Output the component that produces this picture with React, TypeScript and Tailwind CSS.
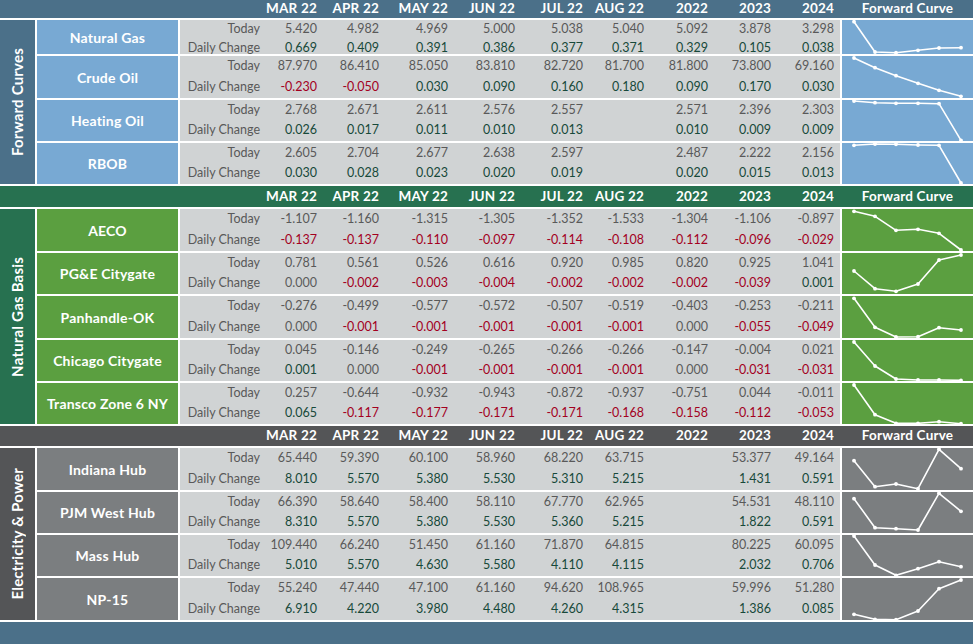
import React from 'react';

type Row = {
  name: string;
  h: string;
  today: string[];
  change: string[];
  curve: number[];
};

type Section = {
  label: string;
  headerBg: string;
  headerH: string;
  labelBg: string;
  cellBg: string;
  chartBg: string;
  rows: Row[];
};

const COLS = ['MAR 22', 'APR 22', 'MAY 22', 'JUN 22', 'JUL 22', 'AUG 22', '2022', '2023', '2024'];
const XS = [12, 33, 54, 76, 97, 119];

const sections: Section[] = [
  {
    label: 'Forward Curves',
    headerBg: 'bg-[#4b7089]',
    headerH: 'h-[18px]',
    labelBg: 'bg-[#4b7089]',
    cellBg: 'bg-[#78a9d3]',
    chartBg: 'bg-[#78a9d3]',
    rows: [
      {
        name: 'Natural Gas',
        h: 'h-[34px]',
        today: ['5.420', '4.982', '4.969', '5.000', '5.038', '5.040', '5.092', '3.878', '3.298'],
        change: ['0.669', '0.409', '0.391', '0.386', '0.377', '0.371', '0.329', '0.105', '0.038'],
        curve: [1.7, 32, 32.7, 30.3, 28, 27.7],
      },
      {
        name: 'Crude Oil',
        h: 'h-[42px]',
        today: ['87.970', '86.410', '85.050', '83.810', '82.720', '81.700', '81.800', '73.800', '69.160'],
        change: ['-0.230', '-0.050', '0.030', '0.090', '0.160', '0.180', '0.090', '0.170', '0.030'],
        curve: [2, 11.7, 19.7, 27.3, 34.3, 40.3],
      },
      {
        name: 'Heating Oil',
        h: 'h-[41px]',
        today: ['2.768', '2.671', '2.611', '2.576', '2.557', '', '2.571', '2.396', '2.303'],
        change: ['0.026', '0.017', '0.011', '0.010', '0.013', '', '0.010', '0.009', '0.009'],
        curve: [1, 2.7, 3.3, 3.3, 3.7, 40.3],
      },
      {
        name: 'RBOB',
        h: 'h-[41px]',
        today: ['2.605', '2.704', '2.677', '2.638', '2.597', '', '2.487', '2.222', '2.156'],
        change: ['0.030', '0.028', '0.023', '0.020', '0.019', '', '0.020', '0.015', '0.013'],
        curve: [2.3, 1, 1.3, 2, 2.3, 40],
      },
    ],
  },
  {
    label: 'Natural Gas Basis',
    headerBg: 'bg-[#277150]',
    headerH: 'h-[21px]',
    labelBg: 'bg-[#277150]',
    cellBg: 'bg-[#5b9f40]',
    chartBg: 'bg-[#5b9f40]',
    rows: [
      {
        name: 'AECO',
        h: 'h-[42px]',
        today: ['-1.107', '-1.160', '-1.315', '-1.305', '-1.352', '-1.533', '-1.304', '-1.106', '-0.897'],
        change: ['-0.137', '-0.137', '-0.110', '-0.097', '-0.114', '-0.108', '-0.112', '-0.096', '-0.029'],
        curve: [2.3, 7.3, 21.3, 20.3, 24.3, 41],
      },
      {
        name: 'PG&E Citygate',
        h: 'h-[41px]',
        today: ['0.781', '0.561', '0.526', '0.616', '0.920', '0.985', '0.820', '0.925', '1.041'],
        change: ['0.000', '-0.002', '-0.003', '-0.004', '-0.002', '-0.002', '-0.002', '-0.039', '0.001'],
        curve: [18, 35.7, 38.3, 31, 7, 2],
      },
      {
        name: 'Panhandle-OK',
        h: 'h-[42px]',
        today: ['-0.276', '-0.499', '-0.577', '-0.572', '-0.507', '-0.519', '-0.403', '-0.253', '-0.211'],
        change: ['0.000', '-0.001', '-0.001', '-0.001', '-0.001', '-0.001', '0.000', '-0.055', '-0.049'],
        curve: [2.3, 31.3, 41, 40.7, 31.7, 34],
      },
      {
        name: 'Chicago Citygate',
        h: 'h-[41px]',
        today: ['0.045', '-0.146', '-0.249', '-0.265', '-0.266', '-0.266', '-0.147', '-0.004', '0.021'],
        change: ['0.001', '0.000', '-0.001', '-0.001', '-0.001', '-0.001', '0.000', '-0.031', '-0.031'],
        curve: [2, 26, 39, 40, 40, 40.3],
      },
      {
        name: 'Transco Zone 6 NY',
        h: 'h-[41px]',
        today: ['0.257', '-0.644', '-0.932', '-0.943', '-0.872', '-0.937', '-0.751', '0.044', '-0.011'],
        change: ['0.065', '-0.117', '-0.177', '-0.171', '-0.171', '-0.168', '-0.158', '-0.112', '-0.053'],
        curve: [2, 31.7, 40.3, 40.3, 38.7, 40.7],
      },
    ],
  },
  {
    label: 'Electricity & Power',
    headerBg: 'bg-[#545557]',
    headerH: 'h-[20px]',
    labelBg: 'bg-[#545557]',
    cellBg: 'bg-[#7b7e80]',
    chartBg: 'bg-[#7b7e80]',
    rows: [
      {
        name: 'Indiana Hub',
        h: 'h-[42px]',
        today: ['65.440', '59.390', '60.100', '58.960', '68.220', '63.715', '', '53.377', '49.164'],
        change: ['8.010', '5.570', '5.380', '5.530', '5.310', '5.215', '', '1.431', '0.591'],
        curve: [12.7, 38.7, 36, 40.7, 1.3, 20.7],
      },
      {
        name: 'PJM West Hub',
        h: 'h-[41px]',
        today: ['66.390', '58.640', '58.400', '58.110', '67.770', '62.965', '', '54.531', '48.110'],
        change: ['8.310', '5.570', '5.380', '5.530', '5.360', '5.215', '', '1.822', '0.591'],
        curve: [6.7, 35.7, 36.7, 38, 1.3, 19.3],
      },
      {
        name: 'Mass Hub',
        h: 'h-[41px]',
        today: ['109.440', '66.240', '51.450', '61.160', '71.870', '64.815', '', '80.225', '60.095'],
        change: ['5.010', '5.570', '4.630', '5.580', '4.110', '4.115', '', '2.032', '0.706'],
        curve: [1, 30, 40.3, 33.7, 26.7, 31.7],
      },
      {
        name: 'NP-15',
        h: 'h-[42px]',
        today: ['55.240', '47.440', '47.100', '61.160', '94.620', '108.965', '', '59.996', '51.280'],
        change: ['6.910', '4.220', '3.980', '4.480', '4.260', '4.315', '', '1.386', '0.085'],
        curve: [36.3, 41.3, 41.7, 33, 10.7, 2],
      },
    ],
  },
];

const GRID = 'grid grid-cols-[80px_57px_62px_69px_67px_68px_61px_64px_63px_63px] items-center';

function changeColor(v: string) {
  if (v.startsWith('-')) return 'text-[#a3001e]';
  if (parseFloat(v) === 0) return 'text-[#5c5c5c]';
  return 'text-[#17493a]';
}

function Curve({ ys }: { ys: number[] }) {
  const pts = ys.map((y, i) => `${XS[i]},${y}`).join(' ');
  return (
    <svg width="131" height="44" className="block overflow-visible">
      <polyline points={pts} fill="none" stroke="white" strokeWidth="1.6" strokeLinejoin="round" />
      {ys.map((y, i) => (
        <circle key={i} cx={XS[i]} cy={y} r="1.9" fill="white" />
      ))}
    </svg>
  );
}

function Header({ bg, h }: { bg: string; h: string }) {
  return (
    <div className={`flex ${bg} ${h} items-center text-white font-bold text-[13.5px] leading-none tracking-[0.2px]`}>
      <div className="w-[180px]" />
      <div className={`w-[654px] ${GRID} text-right`}>
        <div />
        {COLS.map((c) => (
          <div key={c}>{c}</div>
        ))}
      </div>
      <div className="w-[8px]" />
      <div className="w-[131px] text-center">Forward Curve</div>
    </div>
  );
}

function DataRow({ row, sec }: { row: Row; sec: Section }) {
  return (
    <div className={`flex gap-[2px] ${row.h}`}>
      <div className={`w-[141px] ${sec.cellBg} flex items-center justify-center text-white font-bold text-[14px] tracking-[0.2px]`}>
        {row.name}
      </div>
      <div className="w-[660px] bg-[#d0d3d4] flex flex-col text-[12.5px] text-[#595959]">
        <div className={`flex-1 ${GRID} text-right`}>
          <div>Today</div>
          {row.today.map((v, i) => (
            <div key={i}>{v}</div>
          ))}
        </div>
        <div className={`flex-1 ${GRID} text-right`}>
          <div>Daily Change</div>
          {row.change.map((v, i) => (
            <div key={i} className={changeColor(v)}>
              {v}
            </div>
          ))}
        </div>
      </div>
      <div className={`w-[131px] ${sec.chartBg} overflow-hidden`}>
        <Curve ys={row.curve} />
      </div>
    </div>
  );
}

function SectionBlock({ sec }: { sec: Section }) {
  return (
    <div className="flex flex-col gap-[2px]">
      <Header bg={sec.headerBg} h={sec.headerH} />
      <div className="flex gap-[2px]">
        <div className={`w-[35px] ${sec.labelBg} flex items-center justify-center`}>
          <span className="[writing-mode:vertical-rl] rotate-180 whitespace-nowrap text-white font-bold text-[15px] leading-none tracking-[0.2px]">
            {sec.label}
          </span>
        </div>
        <div className="flex flex-col gap-[2px]">
          {sec.rows.map((r) => (
            <DataRow key={r.name} row={r} sec={sec} />
          ))}
        </div>
      </div>
    </div>
  );
}

export default function App() {
  return (
    <div className="w-[975px] h-[644px] bg-white overflow-hidden font-['Lato',sans-serif]">
      <div className="w-[973px] flex flex-col gap-[2px]">
        {sections.map((s) => (
          <SectionBlock key={s.label} sec={s} />
        ))}
        <div className="h-[24px] bg-[#4b7089]" />
      </div>
    </div>
  );
}
